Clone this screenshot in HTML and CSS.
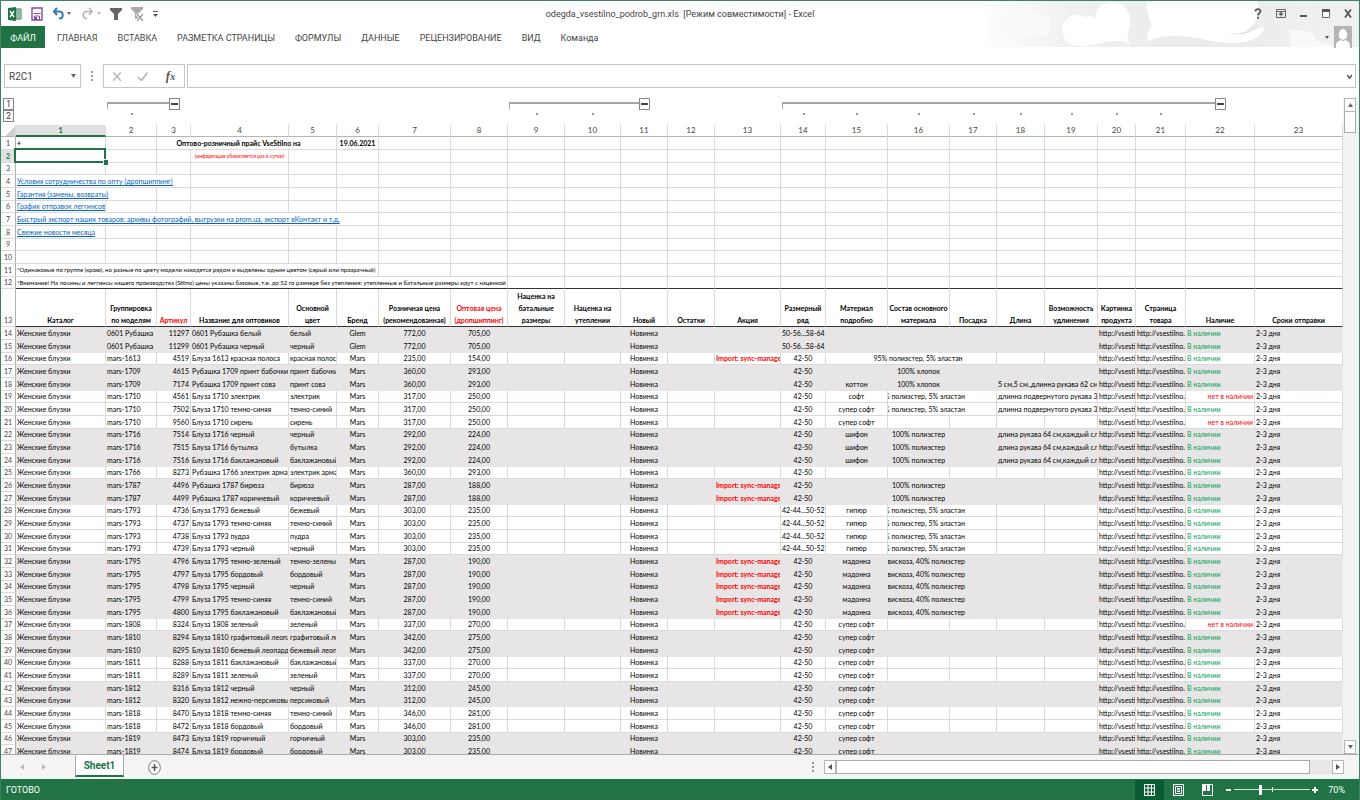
FILE: index.html
```html
<!DOCTYPE html>
<html lang="ru">
<head>
    <meta charset="UTF-8">
    <meta name="viewport" content="width=device-width, initial-scale=1.0">
    <title>odegda_vsestilno_podrob_grn.xls - Excel</title>
    <link rel="stylesheet" href="styles.css">
    <script src="sheet.js" defer></script>
</head>
<body>
<div class="window">
    <svg class="clouds" viewBox="0 0 380 46" aria-hidden="true">
        <defs>
            <linearGradient id="fade">
                <stop offset="0" stop-color="#fff"/>
                <stop offset="0.25" stop-color="#f0f0f0"/>
                <stop offset="0.6" stop-color="#ebebeb"/>
                <stop offset="1" stop-color="#f1f1f1"/>
            </linearGradient>
        </defs>
        <rect width="380" height="46" fill="url(#fade)"/>
        <g fill="#fafafa">
            <path d="M22 31C17 16 22 2 35 2c10 0 12 8 13 13 4-5 9-4 11 0 6-4 13 1 12 9-1 4-3 6 2 6-4 6-16 7-26 4-10-2-18-3-25-3z"/>
        </g>
        <g fill="#fff">
            <path d="M86 38c-6-10-1-24 13-24 5 0 7 2 8 3 1-3 8-3 9 2 0-10 6-18 17-18 12 0 20 10 18 23-1 8-5 10 0 19-16-8-32 1-46 2-10 0-17-2-19-7z"/>
            <path d="M168 0h110c5 14-2 25-12 29 9 1 16-3 20-3-4 12-18 16-32 16-30 0-52-15-85-2-2-6 1-11 4-16-4-8-6-16-5-24z"/>
            <path d="M310 28c10 3 22-1 26 8 3 7 12 5 18 10h-42z" opacity="0.6"/>
        </g>
        <path d="M249 31c10 3 22 0 30-8-3 9-17 13-30 8z" fill="#e3e3e3"/>
    </svg>

    <header class="titlebar">
        <div class="quick">
            <svg width="14" height="14" viewBox="0 0 14 14"><path d="M8 2h5v10H8z" fill="#fff" stroke="#217346"/><path d="M9 4h3M9 6h3M9 8h3M9 10h3" stroke="#217346"/><path d="M0 1l8-1v14l-8-1z" fill="#217346"/><path d="M2 4l4 6M6 4l-4 6" stroke="#fff" stroke-width="1.4"/></svg>
            <button class="tool" aria-label="Сохранить"><svg width="12" height="14" viewBox="0 0 12 14"><path d="M1 1h10v12H1z" fill="#fff" stroke="#8549a8" stroke-width="1.4"/><path d="M2.500 6.500h7M3.500 13V9h5v4" fill="none" stroke="#8549a8"/><path d="M4 10h2v3H4z" fill="#8549a8"/></svg></button>
            <button class="tool" aria-label="Отменить"><svg width="20" height="13" viewBox="0 0 20 13"><path d="M5 1L2 4.500 5 8M2 4.500h5c5 0 5 7 0 7" fill="none" stroke="#3c78b4" stroke-width="2"/><path d="M15 5h4l-2 3z" fill="#666"/></svg></button>
            <button class="tool" aria-label="Вернуть"><svg width="20" height="13" viewBox="0 0 20 13"><path d="M8 1l3 3.500L8 8M11 4.500H6c-5 0-5 7 0 7" fill="none" stroke="#b5b5b5" stroke-width="1.600"/><path d="M16 5h4l-2 3z" fill="#bbb"/></svg></button>
            <button class="tool" aria-label="Фильтр"><svg width="12" height="14" viewBox="0 0 12 14"><path d="M0 1h12v2L8 7v6H4V7L0 3z" fill="#666"/></svg></button>
            <button class="tool" aria-label="Очистить фильтр"><svg width="13" height="14" viewBox="0 0 13 14"><path d="M0 0h12v2L7 7v5H4V6L0 2z" fill="#aaa"/><path d="M6 7l6 7M12 7l-6 7" stroke="#fff" stroke-width="3"/><path d="M6 7l6 7M12 7l-6 7" stroke="#999" stroke-width="1.200"/></svg></button>
            <button class="tool" aria-label="Настройка панели"><svg width="5" height="6" viewBox="0 0 5 6"><path d="M0 0h5v1H0zM0 3h5L2.500 6z" fill="#555"/></svg></button>
        </div>
        <h1 class="caption">odegda_vsestilno_podrob_grn.xls&nbsp; [Режим совместимости] - Excel</h1>
        <div class="controls">
            <button class="tool" aria-label="Справка"><svg width="8" height="11" viewBox="0 0 8 11"><path d="M1.500 3.500C1.500 0.500 6.500 0.500 6.500 3.200 6.500 5 4 5 4 7.500M4 8.800v2" fill="none" stroke="#555" stroke-width="1.800"/></svg></button>
            <button class="tool" aria-label="Параметры ленты"><svg width="10" height="9" viewBox="0 0 10 9"><path d="M.5.500h9v8h-9zM.5 2.500h9" fill="none" stroke="#666"/><path d="M5 7.500V4M3 5.500L5 3.500l2 2" fill="none" stroke="#666" stroke-width="1.200"/></svg></button>
            <button class="tool" aria-label="Свернуть"><svg width="8" height="10" viewBox="0 0 8 10"><path d="M0 6h7v2H0z" fill="#555"/></svg></button>
            <button class="tool" aria-label="Развернуть"><svg width="8" height="9" viewBox="0 0 8 9"><path d="M.5.500h7v8h-7z" fill="#fff" stroke="#666"/><path d="M0 0h8v3H0z" fill="#555"/></svg></button>
            <button class="tool" aria-label="Закрыть"><svg width="8" height="9" viewBox="0 0 8 9"><path d="M1 .5l6 8M7 .5l-6 8" stroke="#555" stroke-width="1.800"/></svg></button>
        </div>
    </header>

    <nav class="ribbon">
        <button class="tab file">ФАЙЛ</button>
        <button class="tab">ГЛАВНАЯ</button>
        <button class="tab">ВСТАВКА</button>
        <button class="tab">РАЗМЕТКА СТРАНИЦЫ</button>
        <button class="tab">ФОРМУЛЫ</button>
        <button class="tab">ДАННЫЕ</button>
        <button class="tab">РЕЦЕНЗИРОВАНИЕ</button>
        <button class="tab">ВИД</button>
        <button class="tab">Команда</button>
        <button class="account" aria-label="Учетная запись">
            <svg width="4" height="3" viewBox="0 0 4 3"><path d="M0 0h4L2 3z" fill="#555"/></svg>
            <svg width="18" height="22" viewBox="0 0 18 22"><path d="M0 0h18v22H0z" fill="#b4b4b4"/><path d="M2 22c0-5 0-6 5-8C3 10 5 3 9 3s6 7 2 11c5 2 5 3 5 8z" fill="#fff"/><path d="M6 13q3 3 6 0" fill="none" stroke="#b4b4b4"/></svg>
        </button>
    </nav>

    <div class="formula">
        <div class="namebox">
            <input class="ref" type="text" value="R2C1" aria-label="Имя">
            <svg width="5" height="4" viewBox="0 0 5 4"><path d="M0 0h5L2.500 4z" fill="#666"/></svg>
        </div>
        <span class="grip"></span>
        <div class="fx">
            <button class="tool" aria-label="Отмена"><svg width="8" height="9" viewBox="0 0 8 9"><path d="M0 0l8 9M8 0L0 9" stroke="#b5b5b5" stroke-width="1.400"/></svg></button>
            <button class="tool" aria-label="Ввод"><svg width="10" height="9" viewBox="0 0 10 9"><path d="M0 5l3.500 3.500L9.500.500" fill="none" stroke="#b5b5b5" stroke-width="1.700"/></svg></button>
            <button class="tool fxsign" aria-label="Вставить функцию">f<small>x</small></button>
        </div>
        <div class="entry">
            <input class="value" type="text" aria-label="Строка формул">
            <svg width="5" height="5" viewBox="0 0 5 5"><path d="M0 1l2.500 3L5 1" fill="none" stroke="#555" stroke-width="1.500"/></svg>
        </div>
    </div>

    <main class="book">
        <div class="pane">
            <div class="outline" id="outline">
                <div class="levels"><button class="box">1</button><button class="box">2</button></div>
            </div>
            <table class="sheet">
                <colgroup id="cols"></colgroup>
                <thead id="head"></thead>
                <tbody id="intro"></tbody>
                <tbody id="titles"></tbody>
                <tbody id="goods"></tbody>
            </table>
        </div>
        <div class="vscroll">
            <button class="arrow" aria-label="Вверх"><svg width="5" height="4" viewBox="0 0 5 4"><path d="M0 4h5L2.500 0z" fill="#666"/></svg></button>
            <span class="thumb"></span>
            <span class="track"></span>
            <button class="arrow" aria-label="Вниз"><svg width="5" height="4" viewBox="0 0 5 4"><path d="M0 0h5L2.500 4z" fill="#666"/></svg></button>
        </div>
    </main>

    <div class="sheets">
        <div class="steps">
            <button class="tool" aria-label="Назад"><svg width="4" height="6" viewBox="0 0 4 6"><path d="M4 0v6L0 3z" fill="#bbb"/></svg></button>
            <button class="tool" aria-label="Вперед"><svg width="4" height="6" viewBox="0 0 4 6"><path d="M0 0v6l4-3z" fill="#bbb"/></svg></button>
        </div>
        <button class="sheettab">Sheet1</button>
        <button class="tool" aria-label="Новый лист"><svg width="13" height="15" viewBox="0 0 13 15"><ellipse cx="6.500" cy="7.500" rx="5.800" ry="6.800" fill="#fff" stroke="#777"/><path d="M6.500 4v7M3.500 7.500h6" stroke="#555" stroke-width="1.500"/></svg></button>
        <div class="hscroll">
            <span class="grip"></span>
            <button class="arrow" aria-label="Влево"><svg width="4" height="6" viewBox="0 0 4 6"><path d="M4 0v6L0 3z" fill="#555"/></svg></button>
            <span class="thumb"></span>
            <span class="track"></span>
            <button class="arrow" aria-label="Вправо"><svg width="4" height="6" viewBox="0 0 4 6"><path d="M0 0v6l4-3z" fill="#555"/></svg></button>
        </div>
    </div>

    <footer class="status">
        <span class="ready">ГОТОВО</span>
        <button class="view active" aria-label="Обычный"><svg width="11" height="12" viewBox="0 0 11 12"><path d="M.5.500h10v11H.5zM.5 4h10M.5 8h10M4 .5v11M7.500.500v11" fill="none" stroke="#fff"/></svg></button>
        <button class="view" aria-label="Разметка страницы"><svg width="11" height="12" viewBox="0 0 11 12"><path d="M.5.500h10v11H.5zM2.500 2.500h6v7h-6zM4 4.500h3M4 6h3M4 7.500h3" fill="none" stroke="#fff"/></svg></button>
        <button class="view" aria-label="Страничный режим"><svg width="11" height="12" viewBox="0 0 11 12"><path d="M.5.500h10v11H.5z" fill="none" stroke="#fff"/><path d="M0 0h4v7H0zM5 0h3v7H5z" fill="#fff"/></svg></button>
        <div class="zoom">
            <button class="tool" aria-label="Уменьшить"><svg width="6" height="8" viewBox="0 0 6 8"><path d="M0 3h5v2H0z" fill="#fff"/></svg></button>
            <input class="slider" type="range" min="10" max="190" value="70" aria-label="Масштаб">
            <button class="tool" aria-label="Увеличить"><svg width="6" height="8" viewBox="0 0 6 8"><path d="M0 3h6v2H0zM2 1h2v6H2z" fill="#fff"/></svg></button>
        </div>
        <span class="percent">70%</span>
    </footer>
</div>
</body>
</html>
```
FILE: styles.css
```css
*, *::before, *::after {
    box-sizing: border-box;
}
body {
    margin: 0;
    font-family: Roboto, 'Open Sans', sans-serif;
    color: #444;
    background: #fff;
}
button, input {
    font: inherit;
    color: inherit;
    border: 0;
    padding: 0;
    margin: 0;
    background: none;
    outline: 0;
}
svg {
    display: block;
}
.window {
    position: relative;
    display: flex;
    flex-direction: column;
    height: 100vh;
    overflow: hidden;
    border: 1px solid #3c8460;
    border-bottom: 0;
}
.clouds {
    position: absolute;
    top: 0;
    right: 0;
    width: 380px;
    height: 46px;
}

/* title bar and ribbon */
.titlebar {
    position: relative;
    display: grid;
    grid-template-columns: 1fr auto 1fr;
    align-items: center;
    height: 25px;
    flex: none;
}
.quick {
    display: flex;
    align-items: center;
    gap: 9px;
    padding-left: 7px;
}
.caption {
    margin: 0;
    font-size: 9px;
    font-weight: normal;
}
.controls {
    display: flex;
    align-items: center;
    justify-content: flex-end;
    gap: 14px;
    padding-right: 7px;
}
.ribbon {
    position: relative;
    display: flex;
    flex: none;
    height: 22px;
    font-size: 9px;
}
.tab {
    padding: 2px 10px 0;
    white-space: nowrap;
}
.file {
    width: 44px;
    margin-right: 2px;
    padding: 2px 0 0;
    color: #fff;
    background: #217346;
}
.account {
    display: flex;
    align-items: center;
    gap: 5px;
    margin-left: auto;
    padding-right: 7px;
}

/* formula bar */
.formula {
    display: flex;
    align-items: center;
    flex: none;
    height: 24px;
    margin: 16px 3px 9px;
    font-size: 10px;
}
.namebox, .fx, .entry {
    display: flex;
    align-items: center;
    height: 24px;
    border: 1px solid #c6c6c6;
    background: #fff;
}
.namebox {
    width: 77px;
    padding: 0 4px;
}
.ref, .value {
    flex: 1;
    min-width: 0;
}
.grip {
    width: 2px;
    height: 10px;
    margin: 0 10px;
    background: repeating-linear-gradient(#999 0 2px, transparent 2px 4px);
}
.fx {
    width: 82px;
    justify-content: space-around;
}
.fxsign {
    font: italic bold 13px 'Liberation Serif', serif;
    color: #555;
}
.fxsign small {
    font-size: 10px;
}
.entry {
    flex: 1;
    margin-left: 2px;
    padding: 0 3px;
}

/* sheet */
.book {
    display: flex;
    flex: 1;
    min-height: 0;
}
.pane {
    flex: 1;
    min-width: 0;
    overflow: hidden;
}
.outline {
    display: grid;
    grid-template-rows: 13px 15px;
    height: 28px;
    padding-top: 1px;
}
.levels {
    grid-area: 1 / 1 / 3 / 2;
    padding-left: 2px;
}
.box {
    display: block;
    width: 11px;
    height: 12px;
    border: 1px solid #7f8891;
    background: #fff;
    font-size: 9px;
    line-height: 10px;
}
.bracket {
    grid-row: 1;
    height: 7px;
    margin: 4px 0 0 1px;
    border-top: 2px solid #a5a5a5;
    border-left: 1px solid #a5a5a5;
}
.collapse {
    grid-row: 1;
    display: flex;
}
.collapse::before, .collapse::after {
    content: '';
    flex: 1;
    height: 6px;
}
.collapse::before {
    border-bottom: 2px solid #a5a5a5;
}
.minus::before {
    content: '';
    display: block;
    height: 2px;
    margin: 0 1px;
    background: #444;
}
.dot {
    grid-row: 2;
    justify-self: center;
    width: 2px;
    height: 2px;
    margin-top: 2px;
    background: #999;
}
.sheet {
    width: 100%;
    table-layout: fixed;
    border-spacing: 0;
    font-family: Lato, Roboto, sans-serif;
    font-size: 7px;
    line-height: 12px;
    color: #000;
}
.sheet th, .sheet td {
    height: 13px;
    padding: 0 1px;
    overflow: hidden;
    white-space: nowrap;
    text-align: left;
    font-weight: normal;
    border-right: 1px solid #dadada;
    border-bottom: 1px solid #dadada;
}
.sheet tr:nth-child(3n) > * {
    height: 12px;
    line-height: 11px;
}
.sheet thead th {
    height: 12px;
    padding: 0;
    font-size: 8px;
    line-height: 11px;
    text-align: center;
    color: #444;
    border-bottom-color: #b5b5b5;
}
.sheet thead .picked {
    color: #217346;
    font-weight: bold;
    background: #e1e1e1;
    border-bottom: 2px solid #217346;
    line-height: 10px;
}
.sheet tbody th {
    padding: 0;
    font-size: 7px;
    text-align: center;
    color: #444;
    border-right-color: #b0b0b0;
}
.sheet tbody .picked {
    color: #217346;
    font-weight: bold;
    background: #e1e1e1;
}
.corner {
    background: linear-gradient(135deg, transparent 60%, #d0d0d0 60%);
}
.sheet a {
    color: #0563c1;
}
.sheet .c {
    text-align: center;
}
.sheet .r {
    text-align: right;
}
.sheet .b {
    font-weight: bold;
}
.sheet .red {
    color: #f00;
}
.sheet .green {
    color: #00a050;
}
.sheet .small {
    font-size: 6px;
}
.sheet .tiny {
    font-size: 5px;
}
.sheet .headline {
    padding-right: 17px;
}
.sheet .wide {
    padding-left: 15px;
}
.sheet .selected {
    position: relative;
    overflow: visible;
}
.selected::before {
    content: '';
    position: absolute;
    inset: -2px -1px -1px -2px;
    border: 2px solid #217346;
}
.selected::after {
    content: '';
    position: absolute;
    right: -3px;
    bottom: -3px;
    width: 5px;
    height: 6px;
    background: #217346;
    border: solid #fff;
    border-width: 1px 0 0 1px;
}
.tail {
    display: flex;
    justify-content: flex-end;
    padding-right: 30px;
}
#intro tr:last-child > td, #titles td {
    border-bottom-color: #333;
}
#titles tr > * {
    height: 38px;
    padding: 0;
    line-height: 12px;
    vertical-align: bottom;
    white-space: pre;
}
#titles td {
    text-align: center;
    font-weight: bold;
}
.shade td {
    background: #e7e5e5;
    border-color: #e7e5e5;
}

/* scroll bars */
.vscroll {
    display: flex;
    flex-direction: column;
    width: 16px;
    padding: 1px 3px 0 1px;
    background: #f3f3f3;
}
.arrow {
    display: flex;
    flex: none;
    align-items: center;
    justify-content: center;
    width: 12px;
    height: 14px;
    border: 1px solid #b5b5b5;
    background: #fff;
}
.vscroll .thumb {
    height: 21px;
    border: 1px solid #ababab;
    border-top: 0;
    background: #fff;
}
.vscroll .track {
    flex: 1;
}

/* sheet tabs */
.sheets {
    display: flex;
    align-items: center;
    flex: none;
    height: 25px;
    border-top: 1px solid #ababab;
    background: #f4f4f4;
}
.steps {
    display: flex;
    gap: 18px;
    width: 74px;
    padding-left: 19px;
}
.sheettab {
    align-self: flex-start;
    width: 49px;
    height: 22px;
    margin-right: 24px;
    font-size: 10px;
    font-weight: bold;
    color: #217346;
    background: #fff;
    border: solid #ababab;
    border-width: 0 1px;
    border-bottom: 2px solid #217346;
}
.hscroll {
    display: flex;
    align-items: center;
    width: 41%;
    margin-left: auto;
    padding-right: 15px;
}
.hscroll .thumb {
    flex: 1;
    height: 14px;
    border: 1px solid #ababab;
    background: #fff;
}
.hscroll .track {
    width: 22px;
    height: 14px;
    background: #e8e8e8;
}

/* status bar */
.status {
    display: flex;
    align-items: center;
    flex: none;
    height: 21px;
    margin: 0 -1px;
    padding-right: 15px;
    font-size: 9px;
    color: #fff;
    background: #217346;
}
.ready {
    flex: 1;
    padding-left: 6px;
}
.view {
    display: flex;
    align-items: center;
    justify-content: center;
    width: 29px;
    height: 20px;
}
.active {
    background: #0a5c33;
}
.zoom {
    display: flex;
    align-items: center;
    gap: 2px;
    margin: 0 10px 0 4px;
}
.slider {
    appearance: none;
    width: 76px;
    height: 10px;
    background:
        linear-gradient(#fff, #fff) center / 1px 5px no-repeat,
        linear-gradient(#cfe0d6, #cfe0d6) center / 100% 1px no-repeat;
}
.slider::-webkit-slider-thumb {
    appearance: none;
    width: 3px;
    height: 10px;
    background: #fff;
}
```
FILE: sheet.js
```js
// column widths, the last column takes what is left
var widths = [15, 90, 51, 34, 98, 48, 42, 72, 57, 57, 56, 47, 47, 66, 45, 62, 62, 47, 48, 53, 38, 50, 69];

// intro rows: html by column number, "span" is the colspan
var intro = [
    {1: {t: '+', k: 'b'}, 3: {t: 'Оптово-розничный прайс VseStilno на', k: 'b c headline', span: 3}, 6: {t: '19.06.2021', k: 'b c'}},
    {1: {t: '', k: 'selected'}, 4: {t: '(информация обновляется раз в сутки)', k: 'c red tiny'}},
    {},
    {1: {t: '<a href="#">Условия сотрудничества по опту (дропшиппинг)</a>', span: 3}},
    {1: {t: '<a href="#">Гарантия (замены, возвраты)</a>', span: 2}},
    {1: {t: '<a href="#">График отправок леггинсов</a>'}},
    {1: {t: '<a href="#">Быстрый экспорт наших товаров: архивы фотографий, выгрузки на prom.ua, экспорт вКонтакт и т.д.</a>', span: 6}},
    {1: {t: '<a href="#">Свежие новости месяца</a>'}},
    {},
    {},
    {1: {t: '*Одинаковые по группе (крою), но разные по цвету модели находятся рядом и выделены одним цветом (серый или прозрачный)', k: 'small', span: 6}},
    {1: {t: '*Внимание! На лосины и леггинсы нашего производства (Stilno) цены указаны базовые, т.е. до 52 го размере без утепления: утепленные и батальные размеры идут с наценкой', k: 'small', span: 8}}
];

var titles = ['Каталог', 'Группировка\nпо моделям', 'Артикул', 'Название для оптовиков', 'Основной\nцвет', 'Бренд',
    'Розничная цена\n(рекомендованная)', 'Оптовая цена\n(дропшиппинг)', 'Наценка на\nбатальные\nразмеры', 'Наценка на\nутеплении',
    'Новый', 'Остатки', 'Акция', 'Размерный\nряд', 'Материал\nподробно', 'Состав основного\nматериала', 'Посадка', 'Длина',
    'Возможность\nудлинения', 'Картинка\nпродукта', 'Страница\nтовара', 'Наличие', 'Сроки отправки'];

// shade | model | article | name | colour | retail | wholesale | action | size | material | composition | length | missing
var goods = [
    '1|0601 Рубашка|11297|0601 Рубашка белый|белый|772|705||50-56...58-64',
    '1|0601 Рубашка|11299|0601 Рубашка черный|черный|772|705||50-56...58-64',
    '|mars-1613|4519|Блуза 1613 красная полоса|красная полоса|235|154|1|42-50||95% полиэстер, 5% эластан',
    '1|mars-1709|4615|Рубашка 1709 принт бабочки|принт бабочки|360|293||42-50||100% хлопок',
    '1|mars-1709|7174|Рубашка 1709 принт сова|принт сова|360|293||42-50|коттон|100% хлопок|5 см,5 см.,длинна рукава 62 см',
    '|mars-1710|4561|Блуза 1710 электрик|электрик|317|250||42-50|софт|95% полиэстер, 5% эластан|длинна подвернутого рукава 37 см|1',
    '|mars-1710|7502|Блуза 1710 темно-синяя|темно-синий|317|250||42-50|супер софт|95% полиэстер, 5% эластан|длинна подвернутого рукава 37 см',
    '|mars-1710|9560|Блуза 1710 сирень|сирень|317|250||42-50|супер софт|||1',
    '1|mars-1716|7514|Блуза 1716 черный|черный|292|224||42-50|шифон|100% полиэстер|длина рукава 64 см,каждый слой',
    '1|mars-1716|7515|Блуза 1716 бутылка|бутылка|292|224||42-50|шифон|100% полиэстер|длина рукава 64 см,каждый слой',
    '1|mars-1716|7516|Блуза 1716 баклажановый|баклажановый|292|224||42-50|шифон|100% полиэстер|длина рукава 64 см,каждый слой',
    '|mars-1766|8273|Рубашка 1766 электрик армани|электрик армани|360|293||42-50',
    '1|mars-1787|4496|Рубашка 1787 бирюза|бирюза|287|188|1|42-50||100% полиэстер',
    '1|mars-1787|4499|Рубашка 1787 коричневый|коричневый|287|188|1|42-50||100% полиэстер',
    '|mars-1793|4736|Блуза 1793 бежевый|бежевый|303|235||42-44...50-52|гипюр|95% полиэстер, 5% эластан',
    '|mars-1793|4737|Блуза 1793 темно-синяя|темно-синий|303|235||42-44...50-52|гипюр|95% полиэстер, 5% эластан',
    '|mars-1793|4738|Блуза 1793 пудра|пудра|303|235||42-44...50-52|гипюр|95% полиэстер, 5% эластан',
    '|mars-1793|4739|Блуза 1793 черный|черный|303|235||42-44...50-52|гипюр|95% полиэстер, 5% эластан',
    '1|mars-1795|4796|Блуза 1795 темно-зеленый|темно-зеленый|287|190|1|42-50|мадонна|60% вискоза, 40% полиэстер',
    '1|mars-1795|4797|Блуза 1795 бордовый|бордовый|287|190|1|42-50|мадонна|60% вискоза, 40% полиэстер',
    '1|mars-1795|4798|Блуза 1795 черный|черный|287|190|1|42-50|мадонна|60% вискоза, 40% полиэстер',
    '1|mars-1795|4799|Блуза 1795 темно-синяя|темно-синий|287|190|1|42-50|мадонна|60% вискоза, 40% полиэстер',
    '1|mars-1795|4800|Блуза 1795 баклажановый|баклажановый|287|190|1|42-50|мадонна|60% вискоза, 40% полиэстер',
    '|mars-1808|8324|Блуза 1808 зеленый|зеленый|337|270||42-50|супер софт|||1',
    '1|mars-1810|8294|Блуза 1810 графитовый леопард|графитовый леопард|342|275||42-50|супер софт',
    '1|mars-1810|8295|Блуза 1810 бежевый леопард|бежевый леопард|342|275||42-50|супер софт',
    '|mars-1811|8288|Блуза 1811 баклажановый|баклажановый|337|270||42-50|супер софт',
    '|mars-1811|8289|Блуза 1811 зеленый|зеленый|337|270||42-50|супер софт',
    '1|mars-1812|8316|Блуза 1812 черный|черный|312|245||42-50|супер софт',
    '1|mars-1812|8320|Блуза 1812 нежно-персиковый|персиковый|312|245||42-50|супер софт',
    '|mars-1818|8470|Блуза 1818 темно-синяя|темно-синий|346|281||42-50|супер софт',
    '|mars-1818|8472|Блуза 1818 бордовый|бордовый|346|281||42-50|супер софт',
    '1|mars-1819|8473|Блуза 1819 горчичный|горчичный|303|235||42-50|супер софт',
    '1|mars-1819|8474|Блуза 1819 бордовый|бордовый|303|235||42-50|супер софт'
];

function byId(id) {
    return document.getElementById(id);
}

function makeRow(number, cells, shade) {
    var html = '<tr' + (shade ? ' class="shade"' : '') + '><th scope="row"' + (number == 2 ? ' class="picked"' : '') + '>' + number + '</th>';
    for (var c = 1; c <= 23; c++) {
        var cell = cells[c] || {};
        var span = cell.span || 1;
        html += '<td' + (cell.k ? ' class="' + cell.k + '"' : '') + (span > 1 ? ' colspan="' + span + '"' : '') + '>' + (cell.t || '') + '</td>';
        c += span - 1;
    }
    return html + '</tr>';
}

function goodsRow(line, i) {
    var v = line.split('|');
    var material = v[9], fabric = v[10], length = v[11];
    var cells = {
        1: {t: 'Женские блузки'},
        2: {t: v[1]},
        3: {t: v[2], k: 'r'},
        4: {t: v[3]},
        5: {t: v[4]},
        6: {t: i < 2 ? 'Glem' : 'Mars', k: 'c'},
        7: {t: v[5] + ',00', k: 'c'},
        8: {t: v[6] + ',00', k: 'c'},
        11: {t: 'Новинка', k: 'c'},
        13: {t: v[7] ? 'Import: sync-manager' : '', k: 'b red'},
        14: {t: v[8], k: 'c'},
        15: {t: material, k: 'c'},
        20: {t: 'http://vsestilno.com'},
        21: {t: 'http://vsestilno.com'},
        22: v[12] ? {t: 'нет в наличии', k: 'r red'} : {t: 'В наличии', k: 'green'},
        23: {t: '2-3 дня'}
    };
    if (fabric && fabric.length > 20) {
        // long text runs over the neighbours, but not over a filled one
        if (material) cells[16] = {t: '<div class="tail">' + fabric + '</div>', span: 2};
        else cells[15] = {t: fabric, k: 'c wide', span: 3};
    } else if (fabric) {
        cells[16] = {t: fabric, k: 'c'};
    }
    if (length) cells[18] = {t: length, span: 2};
    return makeRow(i + 14, cells, v[0]);
}

function makeOutline() {
    var html = '';
    [[2, 3], [9, 11], [14, 22]].forEach(function(g) {
        html += '<span class="bracket" style="grid-column: ' + (g[0] + 1) + ' / ' + (g[1] + 1) + '"></span>';
        html += '<span class="collapse" style="grid-column: ' + (g[1] + 1) + '"><button class="box minus" aria-label="Свернуть группу"></button></span>';
        for (var c = g[0]; c < g[1]; c++) html += '<span class="dot" style="grid-column: ' + (c + 1) + '"></span>';
    });
    byId('outline').insertAdjacentHTML('beforeend', html);
    byId('outline').style.gridTemplateColumns = widths.join('px ') + 'px 1fr';
}

makeOutline();
byId('cols').innerHTML = widths.map(function(w) {
    return '<col style="width: ' + w + 'px">';
}).join('') + '<col>';

var head = '<tr><th class="corner"></th>';
for (var c = 1; c <= 23; c++) head += '<th scope="col"' + (c == 1 ? ' class="picked"' : '') + '>' + c + '</th>';
byId('head').innerHTML = head + '</tr>';

byId('intro').innerHTML = intro.map(function(cells, i) {
    return makeRow(i + 1, cells);
}).join('');

var titleCells = {};
titles.forEach(function(t, i) {
    titleCells[i + 1] = {t: t, k: i == 2 || i == 7 ? 'red' : ''};
});
byId('titles').innerHTML = makeRow(13, titleCells);
byId('goods').innerHTML = goods.map(goodsRow).join('');
```
